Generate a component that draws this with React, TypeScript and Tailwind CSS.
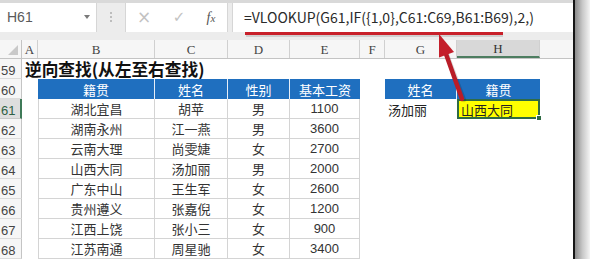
import React from "react";

// Excel sheet: reverse lookup example (VLOOKUP + IF({1,0})) with a red callout arrow.

const CJK = "font-['Noto_Sans_CJK_SC',sans-serif]";

const data: [string, string, string, string][] = [
  ["湖北宜昌", "胡苹", "男", "1100"],
  ["湖南永州", "江一燕", "男", "3600"],
  ["云南大理", "尚雯婕", "女", "2700"],
  ["山西大同", "汤加丽", "男", "2000"],
  ["广东中山", "王生军", "女", "2600"],
  ["贵州遵义", "张嘉倪", "女", "1200"],
  ["江西上饶", "张小三", "女", "900"],
  ["江苏南通", "周星驰", "女", "3400"],
];

function RowHead({ n, selected }: { n: number; selected?: boolean }) {
  return (
    <div
      className={`flex h-full w-[22px] shrink-0 items-end border-b pb-[1px] pl-[1px] text-[13px] leading-none font-['Liberation_Sans',sans-serif] ${
        selected
          ? "border-b-[#c8c8c8] border-r-2 border-r-[#3f7a58] bg-[#dedede] text-[#2f5f44]"
          : "border-b-[#dcdcdc] border-r border-r-[#c4c4c4] bg-[#f6f6f6] text-[#444]"
      }`}
    >
      {n}
    </div>
  );
}

function ColHead({ w, label, selected }: { w: string; label?: string; selected?: boolean }) {
  return (
    <div
      className={`flex h-full shrink-0 items-center justify-center border-r border-[#d0d0d0] pt-[2px] text-[13px] leading-none font-['Liberation_Serif',serif] ${w} ${
        selected ? "border-b-2 border-b-[#4d7d60] bg-[#d8d8d8] text-[#333]" : "bg-[#f6f6f6] text-[#444]"
      }`}
    >
      {label}
    </div>
  );
}

function DataRow({ n, row, children }: { n: number; row: [string, string, string, string]; children?: React.ReactNode }) {
  const cell = "flex h-full shrink-0 items-center justify-center border-r border-b border-[#d4d4d4] text-[13px] leading-none text-[#333]";
  return (
    <div className="flex h-[20.7px]">
      <RowHead n={n} selected={n === 61} />
      <div className="w-[16px] shrink-0" />
      <div className={`${cell} ${CJK} w-[117px] border-l`}>{row[0]}</div>
      <div className={`${cell} ${CJK} w-[73px]`}>{row[1]}</div>
      <div className={`${cell} ${CJK} w-[62px]`}>{row[2]}</div>
      <div className={`${cell} w-[70px] text-[13.5px] font-['Liberation_Sans',sans-serif]`}>{row[3]}</div>
      <div className="w-[25px] shrink-0" />
      {children}
    </div>
  );
}

export default function App() {
  return (
    <div className="relative flex h-[259px] w-[594px] overflow-hidden bg-white">
      <div className="flex w-[573px] shrink-0 flex-col">
        {/* formula bar */}
        <div className="h-[3px] bg-[#d9d9d9]" />
        <div className="flex h-[30px] bg-[#ececec]">
          <div className="flex w-[97px] items-center justify-between border-r border-[#d6d6d6] bg-white pl-[7px] pr-[6px]">
            <span className="text-[14px] text-[#5a5a5a] font-['Liberation_Sans',sans-serif]">H61</span>
            <span className="h-0 w-0 border-x-[3px] border-t-[4px] border-x-transparent border-t-[#7a7a7a]" />
          </div>
          <div className="flex w-[28px] flex-col items-center justify-center gap-[2px]">
            <span className="h-[2px] w-[2px] bg-[#bdbdbd]" />
            <span className="h-[2px] w-[2px] bg-[#bdbdbd]" />
            <span className="h-[2px] w-[2px] bg-[#bdbdbd]" />
          </div>
          <div className="flex w-[103px] items-center border-x border-[#d6d6d6] bg-white text-[#c2c2c2]">
            <span className="w-[36px] text-center text-[17px] leading-none font-['DejaVu_Sans',sans-serif]">×</span>
            <span className="w-[34px] text-center text-[15px] leading-none font-['DejaVu_Sans',sans-serif]">✓</span>
            <span className="w-[30px] text-center text-[14px] italic text-[#555] font-['Liberation_Serif',serif]">
              f<span className="text-[11px]">x</span>
            </span>
          </div>
          <div className="ml-[4px] flex flex-1 items-center border-l border-[#d6d6d6] bg-white pl-[11px] pt-[1px] text-[14px] text-[#2a2a2a] font-['Noto_Sans_CJK_SC',sans-serif]">
            =VLOOKUP(G61,IF({"{"}1,0{"}"},C61:C69,B61:B69),2,)
          </div>
        </div>
        <div className="h-[8px] bg-[#ececec]" />

        {/* column headers */}
        <div className="flex h-[20px] border-b border-[#c4c4c4]">
          <div className="flex h-full w-[22px] shrink-0 items-end justify-end border-r border-[#c4c4c4] bg-[#f6f6f6] p-[3px]">
            <span className="h-0 w-0 [border-bottom:10px_solid_#c9c9c9] [border-left:10px_solid_transparent]" />
          </div>
          <ColHead w="w-[16px]" label="A" />
          <ColHead w="w-[117px]" label="B" />
          <ColHead w="w-[73px]" label="C" />
          <ColHead w="w-[62px]" label="D" />
          <ColHead w="w-[70px]" label="E" />
          <ColHead w="w-[25px]" label="F" />
          <ColHead w="w-[72px]" label="G" />
          <ColHead w="w-[83px]" label="H" selected />
          <div className="h-full flex-1 bg-[#f6f6f6]" />
        </div>

        {/* row 59: title */}
        <div className="flex h-[20.7px]">
          <RowHead n={59} />
          <div className={`flex items-center whitespace-nowrap pl-[3px] text-[16.7px] leading-none font-bold text-[#111] ${CJK}`}>
            逆向查找(从左至右查找)
          </div>
        </div>

        {/* row 60: headers */}
        <div className={`flex h-[20.7px] text-[13px] leading-none text-white ${CJK}`}>
          <RowHead n={60} />
          <div className="w-[16px] shrink-0" />
          <div className="flex w-[117px] shrink-0 items-center justify-center border-r border-[#e6eef8] bg-[#1f6fbf]">籍贯</div>
          <div className="flex w-[73px] shrink-0 items-center justify-center border-r border-[#e6eef8] bg-[#1f6fbf]">姓名</div>
          <div className="flex w-[62px] shrink-0 items-center justify-center border-r border-[#e6eef8] bg-[#1f6fbf]">性别</div>
          <div className="flex w-[70px] shrink-0 items-center justify-center bg-[#1f6fbf]">基本工资</div>
          <div className="w-[25px] shrink-0" />
          <div className="flex w-[72px] shrink-0 items-center justify-center border-r border-[#e6eef8] bg-[#1f6fbf]">姓名</div>
          <div className="flex w-[83px] shrink-0 items-center justify-center bg-[#1f6fbf]">籍贯</div>
        </div>

        {data.map((row, i) => (
          <DataRow key={i} n={61 + i} row={row}>
            {i === 0 && (
              <>
                <div className={`flex w-[72px] shrink-0 items-center pl-[3px] text-[13px] leading-none text-[#222] ${CJK}`}>汤加丽</div>
                <div className={`relative flex w-[83px] shrink-0 items-center border-2 border-[#2f6b45] bg-[#ffff00] pl-[2px] text-[13px] leading-none text-[#222] ${CJK}`}>
                  山西大同
                  <span className="absolute -bottom-[4px] -right-[4px] h-[6px] w-[6px] border border-white bg-[#2f6b45]" />
                </div>
              </>
            )}
          </DataRow>
        ))}
      </div>

      {/* window edge + shadow */}
      <div className="w-[2px] shrink-0 bg-[#161616]" />
      <div className="w-[15px] shrink-0 bg-gradient-to-r from-[#8c8c8c] via-[#c8c8c8] to-[#f4f4f4]" />
      <div className="flex-1 bg-white" />

      {/* annotation: underline + arrow */}
      <svg className="pointer-events-none absolute inset-0" width="594" height="259" viewBox="0 0 594 259">
        <line x1="246" y1="35.5" x2="503" y2="35.5" stroke="#000" strokeOpacity="0.12" strokeWidth="3" />
        <line x1="245" y1="33.5" x2="503" y2="33.5" stroke="#c8202a" strokeWidth="3" />
        <line x1="464" y1="100" x2="447" y2="55" stroke="#000" strokeOpacity="0.15" strokeWidth="4.5" strokeLinecap="round" />
        <line x1="462" y1="99" x2="446" y2="54" stroke="#b91d28" strokeWidth="4.5" strokeLinecap="round" />
        <polygon points="439,34 454,52 439,57.5" fill="#c41f2b" />
      </svg>
    </div>
  );
}
